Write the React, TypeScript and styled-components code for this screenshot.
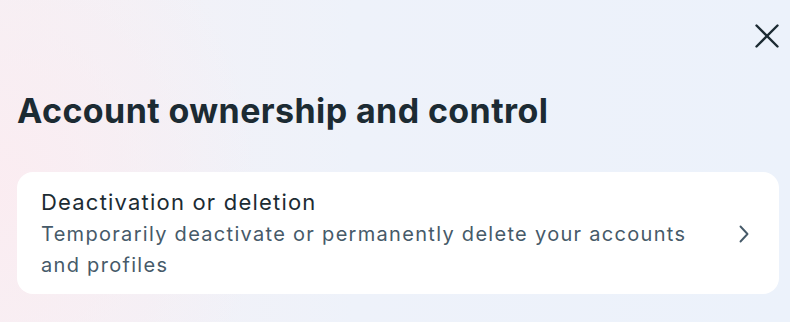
import styled, { createGlobalStyle } from "styled-components";

const GlobalStyle = createGlobalStyle`
  html, body {
    margin: 0;
    padding: 0;
  }
  body {
    font-family: Inter, "Noto Sans", sans-serif;
    color: #1c2b33;
  }
`;

const Page = styled.div`
  width: 790px;
  height: 322px;
  box-sizing: border-box;
  padding: 0 11px 0 17px;
  display: flex;
  flex-direction: column;
  background:
    radial-gradient(ellipse 260px 320px at 0% 60%, rgba(251, 236, 241, 0.95) 0%, rgba(251, 236, 241, 0) 100%),
    linear-gradient(90deg, #f5f1f5 0%, #eef2fa 45%, #ecf2fb 100%);
  overflow: hidden;
`;

const TopBar = styled.div`
  display: flex;
  justify-content: flex-end;
  padding-top: 24px;
  height: 24px;
`;

const CloseButton = styled.button`
  border: none;
  background: none;
  padding: 0;
  width: 24px;
  height: 24px;
  display: flex;
  align-items: center;
  justify-content: center;
  color: #1c2b33;
  cursor: pointer;
`;

const Title = styled.h1`
  margin: 43px 0 0 0;
  font-size: 34px;
  font-weight: 700;
  line-height: 40px;
  letter-spacing: 0.4px;
  color: #1c2b33;
`;

const Card = styled.div`
  margin-top: 41px;
  width: 762px;
  box-sizing: border-box;
  background: #ffffff;
  border-radius: 16px;
  padding: 16px 29px 13px 24px;
  display: flex;
  align-items: center;
  gap: 26px;
  cursor: pointer;
`;

const CardText = styled.div`
  flex: 1;
  display: flex;
  flex-direction: column;
`;

const CardTitle = styled.div`
  font-size: 22px;
  line-height: 28px;
  font-weight: 400;
  letter-spacing: 1.2px;
  color: #1c2b33;
`;

const CardDesc = styled.div`
  margin-top: 3px;
  font-size: 20px;
  line-height: 31px;
  letter-spacing: 1.3px;
  color: #465a69;
`;

const Chevron = styled.div`
  display: flex;
  align-items: center;
  color: #465a69;
  margin-bottom: 2px;
`;

export default function App() {
  return (
    <>
      <GlobalStyle />
      <Page>
        <TopBar>
          <CloseButton aria-label="Close">
            <svg width="24" height="24" viewBox="0 0 24 24" fill="none">
              <path d="M1.5 1.5L22.5 22.5M22.5 1.5L1.5 22.5" stroke="currentColor" strokeWidth="2.4" strokeLinecap="round" />
            </svg>
          </CloseButton>
        </TopBar>
        <Title>Account ownership and control</Title>
        <Card>
          <CardText>
            <CardTitle>Deactivation or deletion</CardTitle>
            <CardDesc>Temporarily deactivate or permanently delete your accounts and profiles</CardDesc>
          </CardText>
          <Chevron>
            <svg width="12" height="18" viewBox="0 0 12 18" fill="none">
              <path d="M2.5 1.5L9.5 9L2.5 16.5" stroke="currentColor" strokeWidth="1.9" strokeLinecap="round" strokeLinejoin="round" />
            </svg>
          </Chevron>
        </Card>
      </Page>
    </>
  );
}
